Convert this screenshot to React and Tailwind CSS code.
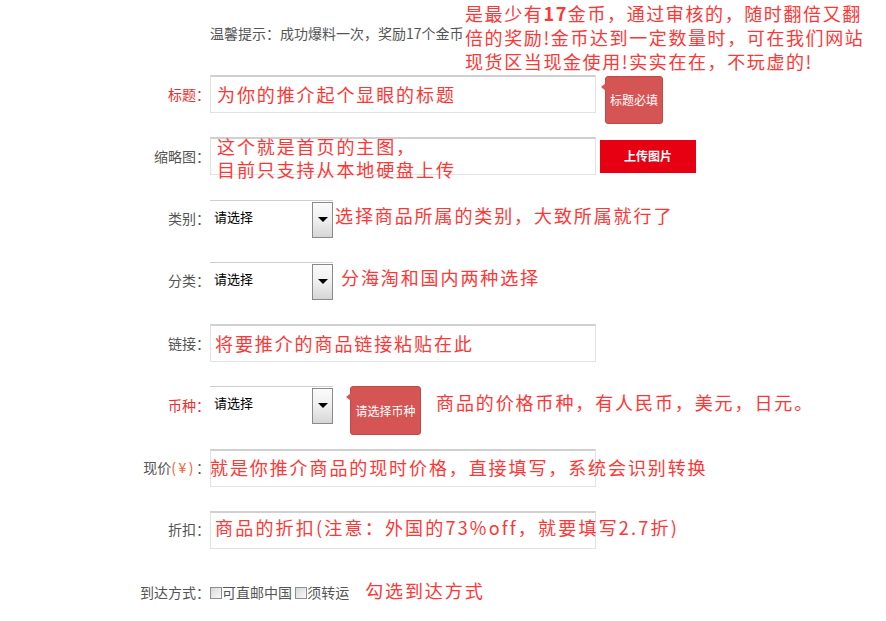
import React from "react";

const font = { fontFamily: '"Noto Sans CJK SC", "Noto Sans", sans-serif' };

function Label({ children, red }) {
  return (
    <div className={`w-[210px] shrink-0 text-right text-[14px] ${red ? "text-[#f02b2b]" : "text-[#555]"}`}>
      {children}
    </div>
  );
}

function Box({ children, className = "" }) {
  return (
    <div className={`relative h-[38px] w-[386px] shrink-0 border border-[#e2e2e2] border-t-2 border-t-[#d0d0d0] bg-white ${className}`}>
      {children}
    </div>
  );
}

function Select() {
  return (
    <div className="flex h-[38px] w-[123px] shrink-0 border-t border-[#cfcfcf] bg-white">
      <div className="flex-1 pl-[4px] pt-[6px] text-[13px] text-black">请选择</div>
      <div className="mt-[1px] flex h-[36px] w-[21px] flex-col items-center border border-[#8a8a8a] bg-gradient-to-b from-[#fbfbfb] via-[#efefef] to-[#d6d6d6] pt-[14px]">
        <div className="h-0 w-0 border-x-[5px] border-t-[5px] border-x-transparent border-t-black" />
      </div>
    </div>
  );
}

function Tip({ children, className = "" }) {
  return (
    <div className={`relative flex shrink-0 items-center justify-center rounded-[3px] border border-[#c54848] bg-[#d55555] text-[12px] text-white ${className}`}>
      <div className="absolute left-[-5px] top-[6px] h-0 w-0 border-y-[4px] border-r-[5px] border-y-transparent border-r-[#d55555]" />
      {children}
    </div>
  );
}

function Red({ children, className = "" }) {
  return <div className={`whitespace-nowrap text-[18px] tracking-[1.9px] text-[#ff3636] ${className}`}>{children}</div>;
}

function Check() {
  return <span className="inline-block h-[12px] w-[12px] border border-[#8f8f8f] bg-gradient-to-br from-[#d8d8d8] to-[#fafafa] align-[-1px]" />;
}

export default function App() {
  return (
    <div className="h-[621px] w-[886px] overflow-hidden bg-white" style={font}>
      {/* notice */}
      <div className="flex h-[75px] items-start">
        <div className="w-[210px] shrink-0" />
        <div className="mt-[23px] w-[255px] shrink-0 whitespace-nowrap text-[14px] text-[#555]">温馨提示：成功爆料一次，奖励17个金币</div>
        <div className="mt-[1px] w-[415px] text-[18px] leading-[24px] tracking-[1.6px] text-[#ff3636]">
          是最少有<b>17</b>金币，通过审核的，随时翻倍又翻倍的奖励!金币达到一定数量时，可在我们网站现货区当现金使用!实实在在，不玩虚的!
        </div>
      </div>

      <div className="flex flex-col gap-[24.25px]">
        {/* title */}
        <div className="flex h-[38px] items-center">
          <Label red>标题：</Label>
          <Box className="flex items-center pl-[6px]">
            <Red>为你的推介起个显眼的标题</Red>
          </Box>
          <Tip className="ml-[9px] mt-[12px] h-[48px] w-[58px]">标题必填</Tip>
        </div>

        {/* thumbnail */}
        <div className="flex h-[38px] items-center">
          <Label>缩略图：</Label>
          <Box className="pl-[6px]">
            <Red className="-mt-[4px] leading-[23px]">这个就是首页的主图，</Red>
            <Red className="leading-[23px]">目前只支持从本地硬盘上传</Red>
          </Box>
          <div className="ml-[4px] flex h-[33px] w-[96px] items-center justify-center bg-[#e60012] text-[12px] font-bold text-white">上传图片</div>
        </div>

        {/* category */}
        <div className="flex h-[38px] items-center">
          <Label>类别：</Label>
          <Select />
          <Red className="ml-[2px] -mt-[6px]">选择商品所属的类别，大致所属就行了</Red>
        </div>

        {/* type */}
        <div className="flex h-[38px] items-center">
          <Label>分类：</Label>
          <Select />
          <Red className="ml-[8px] -mt-[6px]">分海淘和国内两种选择</Red>
        </div>

        {/* link */}
        <div className="flex h-[38px] items-center">
          <Label>链接：</Label>
          <Box className="flex items-center pl-[4px]">
            <Red>将要推介的商品链接粘贴在此</Red>
          </Box>
        </div>

        {/* currency */}
        <div className="flex h-[38px] items-center">
          <Label red>币种：</Label>
          <Select />
          <Tip className="ml-[17px] mt-[11px] h-[49px] w-[71px]">请选择币种</Tip>
          <Red className="ml-[15px] -mt-[5px] tracking-[1.6px]">商品的价格币种，有人民币，美元，日元。</Red>
        </div>

        {/* price */}
        <div className="flex h-[38px] items-center">
          <Label>
            现价<span className="tracking-[2.5px] text-[#ff5a1f]">(¥)</span>：
          </Label>
          <Box className="flex items-center">
            <Red className="-ml-[1px] -mt-[2px]">就是你推介商品的现时价格，直接填写，系统会识别转换</Red>
          </Box>
        </div>

        {/* discount */}
        <div className="flex h-[38px] items-center">
          <Label>折扣：</Label>
          <Box className="pl-[4px] pt-[1px]">
            <Red className="tracking-[2.2px]">商品的折扣(注意：外国的73%off，就要填写2.7折)</Red>
          </Box>
        </div>

        {/* arrive */}
        <div className="flex h-[38px] items-center">
          <Label>到达方式：</Label>
          <div className="whitespace-nowrap text-[14px] text-[#555]">
            <Check />可直邮中国 <Check />须转运
          </div>
          <Red className="ml-[16px] -mt-[4px]">勾选到达方式</Red>
        </div>
      </div>
    </div>
  );
}
